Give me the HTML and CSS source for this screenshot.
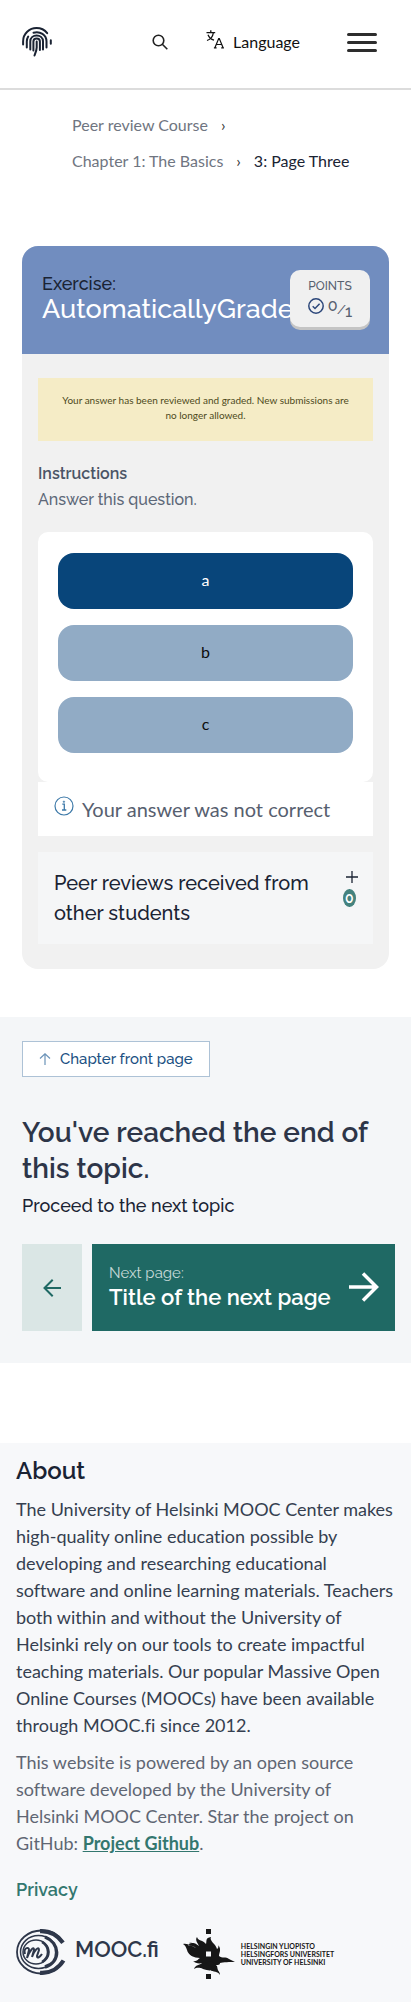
FILE: index.html
```html
<!DOCTYPE html>
<html lang="en">
<head>
<meta charset="utf-8">
<meta name="viewport" content="width=device-width, initial-scale=1">
<title>Page Three</title>
<link rel="stylesheet" href="styles.css">
</head>
<body>
<header class="topbar">
  <a class="brand" href="#" aria-label="Home">
    <svg width="30" height="30" viewBox="0 0 30 30" fill="none" stroke="#1a2333" stroke-width="2" stroke-linecap="round">
      <path d="M1.100 17.500v-3C1.100 6.500 7.500 1.100 14.500 1.100c4.400 0 8.200 1.900 10.700 5.100M28.800 13.200v3.600"/>
      <path d="M4.800 20.500v-6c0-1.800.5-3.500 1.400-5M11.500 5.700c6.500-1.800 13 2.100 13 8.800v6"/>
      <path d="M8.300 22.500v-8c0-7.900 12.700-7.900 12.700 0v8"/>
      <path d="M11.400 23.500v-9c0-4 6.500-4 6.500 0v8.500"/>
      <path d="M14.700 14.500v6c0 2.700-1 5-2.200 8"/>
    </svg>
  </a>
  <button class="icon-btn search" type="button" aria-label="Search">
    <svg width="16" height="16" viewBox="0 0 16 16" fill="none" stroke="#222" stroke-width="1.600"><circle cx="6.500" cy="6.500" r="5.300"/><path d="M10.300 10.300l5 5"/></svg>
  </button>
  <button class="icon-btn language" type="button">
    <svg width="18" height="19" viewBox="0 0 18 19" fill="none" stroke="#111" stroke-width="1.300"><path d="M.5 2.700h8.700M4.800.3v2.400M2 4.700c1 2.500 3.500 4.700 6 5.500M7.300 3c-.5 3.500-3 6.500-6.300 7.500"/><path d="M9 17.600L12.700 8.500h.6l3.700 9.100M10.300 14.500h5.200M7.900 17.900h2.700M15.200 17.900h2.700" stroke-width="1.200"/></svg>
    <span>Language</span>
  </button>
  <button class="icon-btn menu" type="button" aria-label="Open menu"><span></span><span></span><span></span></button>
</header>

<nav class="crumbs" aria-label="Breadcrumbs">
  <ol>
    <li><a href="#">Peer review Course</a><span class="sep">›</span></li>
    <li><a href="#">Chapter 1: The Basics</a><span class="sep">›</span></li>
    <li class="current">3: Page Three</li>
  </ol>
</nav>

<main>
  <section class="exercise">
    <div class="exercise-head">
      <h2><span class="kind">Exercise:</span><span class="name">AutomaticallyGraded</span></h2>
      <div class="points">
        <span class="points-label">POINTS</span>
        <span class="score">
          <svg width="16" height="16" viewBox="0 0 16 16" fill="none" stroke="#2c477a" stroke-width="1.500"><circle cx="8" cy="8" r="7.200"/><path d="M4.700 8.300l2.300 2.200 4.600-4.700"/></svg>
          <span class="fraction"><span>0</span><i>/</i><span class="max">1</span></span>
        </span>
      </div>
    </div>
    <div class="exercise-body">
      <p class="notice">Your answer has been reviewed and graded. New submissions are no longer allowed.</p>
      <h3>Instructions</h3>
      <p class="assignment">Answer this question.</p>
      <div class="options">
        <button class="option selected" type="button">a</button>
        <button class="option" type="button">b</button>
        <button class="option" type="button">c</button>
      </div>
      <div class="feedback">
        <svg width="20" height="20" viewBox="0 0 20 20" fill="none" stroke="#3d79a8" stroke-width="1.200"><circle cx="10" cy="10" r="9"/><path d="M8.300 8.200h2v5.600M8 14h4.300" stroke-width="1.300"/><circle cx="9.900" cy="5.700" r=".8" fill="#3d79a8" stroke-width=".5"/></svg>
        <p>Your answer was not correct</p>
      </div>
      <details class="reviews">
        <summary>
          <span class="reviews-title">Peer reviews received from other students</span>
          <span class="reviews-side">
            <svg width="12" height="12" viewBox="0 0 12 12" stroke="#1a2333" stroke-width="1.300"><path d="M6 0v12M0 6h12"/></svg>
            <span class="count">0</span>
          </span>
        </summary>
      </details>
    </div>
  </section>

  <section class="next">
    <a class="front" href="#">
      <svg width="12" height="12" viewBox="0 0 12 12" fill="none" stroke="#6b93b8" stroke-width="1.200"><path d="M6 12V1M1 5.500L6 .8l5 4.700"/></svg>
      <span>Chapter front page</span>
    </a>
    <h2>You've reached the end of this topic.</h2>
    <p>Proceed to the next topic</p>
    <div class="pager">
      <a class="prev" href="#" aria-label="Previous page">
        <svg width="18" height="18" viewBox="0 0 18 18" fill="none" stroke="#1f6964" stroke-width="2"><path d="M18 9H1.500M9.700.8L1.500 9l8.200 8.200"/></svg>
      </a>
      <a class="forward" href="#">
        <span class="forward-text"><small>Next page:</small><strong>Title of the next page</strong></span>
        <svg width="30" height="30" viewBox="0 0 30 30" fill="none" stroke="#fff" stroke-width="3.500"><path d="M0 15h27M14 1.500L27.500 15 14 28.500"/></svg>
      </a>
    </div>
  </section>
</main>

<footer class="footer">
  <h2>About</h2>
  <p class="about">The University of Helsinki MOOC Center makes high-quality online education possible by developing and researching educational software and online learning materials. Teachers both within and without the University of Helsinki rely on our tools to create impactful teaching materials. Our popular Massive Open Online Courses (MOOCs) have been available through MOOC.fi since 2012.</p>
  <p class="powered">This website is powered by an open source software developed by the University of Helsinki MOOC Center. Star the project on GitHub: <a href="#">Project Github</a>.</p>
  <a class="privacy" href="#">Privacy</a>
  <div class="logos">
    <a class="mooc" href="#">
      <svg width="50" height="46" viewBox="0 0 50 46" fill="none" stroke="#2e374a">
        <path d="M46 12.500C42 5 34 1.500 25.500 1.500 12 1.500 1 11 1 23s11 21.500 24.500 21.500c8.500 0 16.500-4 20.500-11" stroke-width="1.800"/>
        <path d="M24 2.200c9.500-.5 17.500 4 23 11.500M47.500 31.500C42.500 39.500 34 44.500 24 43.800" stroke-width="4.200"/>
        <ellipse cx="22.500" cy="23" rx="18" ry="16.500" stroke-width="1.500"/>
        <path d="M29 8c15 6 16 25 0 30" stroke-width="3.500"/>
        <ellipse cx="20" cy="23" rx="13" ry="12" stroke-width="1.500"/><path d="M26 13c8 5 8 15 0 20" stroke-width="2.500"/>
        <path d="M9 25c-2-6 4-8 4-4l-2 8c2-6 7-13 7-8l-2 7c2-6 7-12 7-7l-2 6c0 3 3 1 5-2" stroke-width="2"/>
      </svg>
      <span>MOOC.fi</span>
    </a>
    <a class="uni" href="#">
      <svg width="52" height="50" viewBox="0 0 52 50" fill="#171717">
        <path d="M23 0h5v5h-5zM23 45h5v5h-5z"/>
        <path fill-rule="evenodd" d="M0 15c5-1 8 2 13 4-2-2-8-4-8-2 0-2 2-3 4-3-1-1-3 0-3 0 3-1 7 0 10 3-2-4-4-6-2-9 1 4 6 3 9 7 1-3-1-6 5-7-2 4 5 7 6 12 1 0 2-3 1-4 4 4 1 8 1 11 3 3 7 0 10 3l6 3c-5 0-12 0-15 1 0 3-4 1-5 3 0 3 5 4 5 9-2-4-7-3-10-5 1 1-4 0-7-1-4-2-7-1-9 0 1-4 6-4 8-6-3 1-7 0-9-2 4 1 5-2 7-3-6 0-12-3-13-8-1-3-2-5-4-6zM23 22.500v5h5v-5z"/>
        <path d="M22 34c4 2 6 3 7 5l6 3-1-5-6-5z"/>
      </svg>
      <span>HELSINGIN YLIOPISTO<br>HELSINGFORS UNIVERSITET<br>UNIVERSITY OF HELSINKI</span>
    </a>
  </div>
</footer>
</body>
</html>
```
FILE: styles.css
```css
* { box-sizing: border-box; }
body {
  margin: 0;
  background: #fff;
  color: #1a2333;
  font: 16px/24px Lato, sans-serif;
  font-variant-ligatures: none;
}
h2, h3, p, ol { margin: 0; }
a { color: inherit; text-decoration: none; }
button { font: inherit; border: 0; cursor: pointer; }
svg { flex: none; display: block; }

.topbar {
  display: flex;
  align-items: center;
  height: 90px;
  padding: 0 34px 4px 22px;
  border-bottom: 2px solid #dcdcdc;
}
.icon-btn {
  display: flex;
  align-items: center;
  padding: 0;
  background: none;
  color: #111;
}
.search { margin-left: auto; }
.language { gap: 9px; margin-left: 38px; }
.language svg { margin-bottom: 6px; }
.menu { flex-direction: column; gap: 5px; margin-left: 47px; }
.menu span {
  width: 30px;
  height: 3px;
  border-radius: 2px;
  background: #2d2d2d;
}

.crumbs { padding: 17px 40px 67px 72px; }
.crumbs ol {
  display: flex;
  flex-wrap: wrap;
  padding: 0;
  list-style: none;
  line-height: 36px;
  color: #6f7581;
}
.crumbs .sep { margin: 0 13px; color: #333; }
.crumbs .current { color: #1a2333; }

.exercise {
  margin: 0 22px 48px;
  overflow: hidden;
  border-radius: 16px;
  background: #f1f1f1;
}
.exercise-head {
  position: relative;
  height: 108px;
  padding: 27px 20px;
  background: #718dbf;
}
.exercise-head h2 {
  font-family: Raleway, Lato, sans-serif;
  font-weight: 500;
}
.exercise-head h2 span { display: block; }
.kind { font-size: 18px; line-height: 22px; color: #1a2333; }
.name { font-size: 27px; line-height: 28px; color: #fff; }
.points {
  position: absolute;
  top: 24px;
  right: 19px;
  display: flex;
  flex-direction: column;
  align-items: center;
  width: 80px;
  height: 57px;
  padding-top: 6px;
  border-radius: 10px;
  background: #f0f0f0;
  box-shadow: 0 3px 0 #c4c4c4;
  color: #57606f;
}
.points-label { font: 500 12px/20px Raleway, Lato, sans-serif; }
.score { display: flex; gap: 4px; align-items: flex-start; }
.score svg { margin-top: 2px; }
.fraction { display: flex; font: 500 16px/20px Raleway, Lato, sans-serif; }
.fraction .max { padding-top: 6px; }
.fraction i { padding-top: 4px; font-size: 12px; }

.exercise-body { padding: 24px 16px 25px; }
.notice {
  padding: 15px 20px 18px;
  background: #f5ecc6;
  color: #4d4a20;
  font-size: 10px;
  line-height: 15px;
  text-align: center;
}
.exercise-body h3 {
  margin-top: 20px;
  font: 600 16px/26px Raleway, Lato, sans-serif;
  color: #4b5566;
}
.assignment {
  margin-bottom: 19px;
  font: 500 16px/26px Raleway, Lato, sans-serif;
  color: #5d6878;
}
.options {
  display: flex;
  flex-direction: column;
  gap: 16px;
  padding: 21px 20px 29px;
  border-radius: 10px;
  background: #fff;
}
.option {
  height: 56px;
  padding: 0 16px 2px;
  border-radius: 16px;
  background: #91abc5;
  color: #0d0d0d;
}
.option.selected { background: #08457a; color: #fff; }
.feedback {
  display: flex;
  gap: 8px;
  padding: 14px 16px;
  background: #fff;
}
.feedback p { font-size: 20px; line-height: 26px; color: #57606f; }
.reviews { margin-top: 16px; background: #f5f6f7; }
.reviews summary {
  display: flex;
  gap: 16px;
  justify-content: space-between;
  padding: 16px 15px 16px 16px;
  list-style: none;
  cursor: pointer;
}
.reviews-title { font: 500 20px/30px Raleway, Lato, sans-serif; }
.reviews-side {
  display: flex;
  flex-direction: column;
  align-items: flex-start;
  gap: 6px;
  padding-top: 3px;
}
.reviews-side svg { margin-left: 3px; }
.count {
  padding: 0 2px;
  border-radius: 50%;
  background: #44827e;
  color: #fff;
  font: 600 14px/18px Raleway, Lato, sans-serif;
}

.next {
  padding: 24px 16px 32px 22px;
  background: #f4f6f8;
  font-family: Raleway, Lato, sans-serif;
  font-weight: 500;
}
.front {
  display: flex;
  align-items: center;
  gap: 9px;
  width: fit-content;
  height: 36px;
  padding: 0 16px;
  border: 1px solid #adc2d6;
  background: #fff;
  color: #1c5183;
  font-size: 15px;
}
.next h2 {
  margin-top: 38px;
  font-size: 28px;
  font-weight: 600;
  line-height: 36px;
  color: #2d3548;
}
.next p { margin: 6px 0 25px; font-size: 18px; line-height: 26px; }
.pager { display: flex; gap: 10px; }
.prev {
  display: flex;
  flex: none;
  align-items: center;
  justify-content: center;
  width: 60px;
  background: #dae6e5;
}
.forward {
  display: flex;
  flex: 1;
  align-items: center;
  justify-content: space-between;
  height: 87px;
  padding: 0 16px 2px 17px;
  background: #1f6964;
  color: #fff;
}
.forward-text { display: flex; flex-direction: column; white-space: nowrap; }
.forward small { font-size: 15px; line-height: 22px; font-weight: 400; color: #c7dad8; }
.forward strong { font-size: 22px; line-height: 27px; font-weight: 600; }

.footer {
  margin-top: 80px;
  padding: 12px 16px 23px;
  background: #f7f8fa;
}
.footer h2 { font: 600 24px/32px Raleway, Lato, sans-serif; }
.about, .powered { font-size: 18px; line-height: 27px; }
.about { margin-top: 9px; color: #353f50; }
.powered { margin: 10px 0 19px; color: #5f6673; }
.powered a { color: #33776f; font-weight: 700; text-decoration: underline; }
.privacy { display: block; width: fit-content; font: 600 18px/27px Raleway, Lato, sans-serif; color: #33776f; }
.logos { display: flex; gap: 24px; margin-top: 26px; height: 50px; }
.mooc, .uni { display: flex; }
.mooc { gap: 9px; color: #2e374a; font: 600 22px/40px Raleway, Lato, sans-serif; }
.uni { gap: 6px; align-items: center; color: #171717; font: 700 7px/8px Lato, sans-serif; }
```
